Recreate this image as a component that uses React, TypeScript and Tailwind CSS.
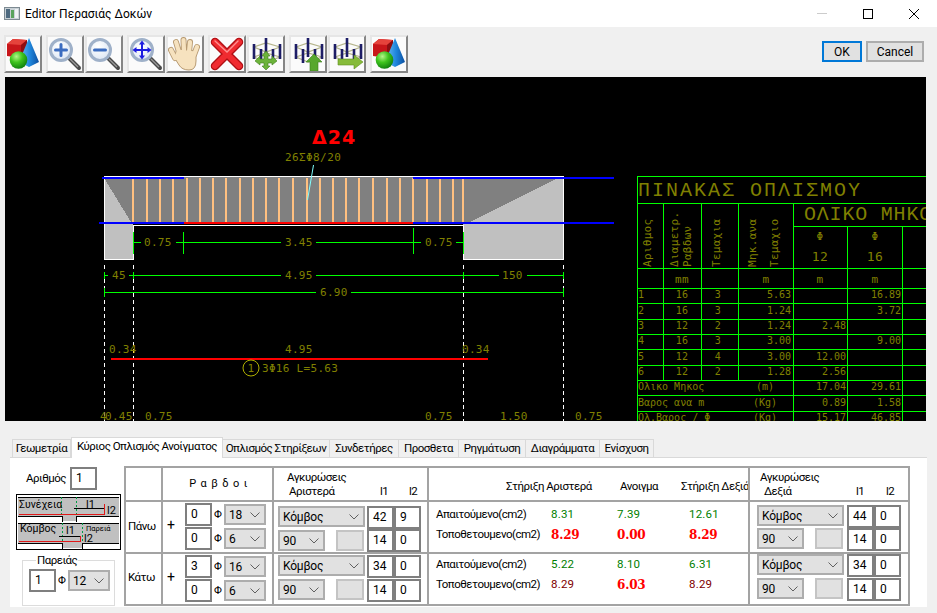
import React from "react";

const body = "text-[11.5px] tracking-[-0.5px] whitespace-nowrap";
const sel = "bg-[#e1e1e1] border-2 border-[#adadad] flex items-center justify-between pl-[3px] pr-[4px] text-[12px] tracking-[-0.2px] leading-none text-black";
const chev = (
  <svg width="10" height="6" viewBox="0 0 10 6" className="shrink-0"><path d="M0.5 0.5 L5 5 L9.5 0.5" fill="none" stroke="#606060" strokeWidth="1" /></svg>
);
function Sel({ v, w }: { v: string; w: string }) {
  return <div className={sel + " h-[21px] " + w}><span>{v}</span>{chev}</div>;
}
function Box({ v }: { v: string }) {
  return <div className="w-[27px] h-[23px] shrink-0 border-2 border-[#7f7f7f] bg-white flex items-center pl-[4px] pb-[2px] text-[12px] leading-none text-black">{v}</div>;
}

function Defs() {
  return (
    <defs>
      <radialGradient id="sph" cx="0.38" cy="0.3" r="0.75"><stop offset="0" stopColor="#b6f58a" /><stop offset="0.45" stopColor="#3fc51e" /><stop offset="1" stopColor="#0c7a0c" /></radialGradient>
      <linearGradient id="con" x1="0" x2="1" y1="0" y2="0"><stop offset="0" stopColor="#6fc3f5" /><stop offset="0.55" stopColor="#1f86dc" /><stop offset="1" stopColor="#0d4fa0" /></linearGradient>
      <radialGradient id="lens" cx="0.4" cy="0.35" r="0.8"><stop offset="0" stopColor="#ffffff" /><stop offset="1" stopColor="#d6e2f2" /></radialGradient>
    </defs>
  );
}
function Shapes() {
  return (
    <svg width="34" height="34" viewBox="0 0 34 34">
      <Defs />
      <path d="M1 7 L7 2 L21 3 L21 16 L15 21 L1 19 Z" fill="#c8161a" />
      <path d="M1 7 L7 2 L21 3 L15 8 Z" fill="#e5433c" />
      <path d="M15 8 L21 3 L21 16 L15 21 Z" fill="#8e0f12" />
      <path d="M23 1 L33 25 L23 30 L13 25 Z" fill="url(#con)" />
      <circle cx="12.5" cy="23" r="8.8" fill="url(#sph)" />
    </svg>
  );
}
function Mag({ kind }: { kind: "plus" | "minus" | "move" }) {
  return (
    <svg width="34" height="34" viewBox="0 0 34 34">
      <Defs />
      <line x1="21" y1="21" x2="31" y2="31" stroke="#4a4a4a" strokeWidth="4" strokeLinecap="round" />
      <line x1="22" y1="22" x2="30" y2="30" stroke="#9a9a9a" strokeWidth="1.2" />
      <circle cx="13" cy="13" r="10.5" fill="url(#lens)" stroke="#9fb1c9" strokeWidth="3" />
      {kind === "plus" && <path d="M13 7.5 V18.5 M7.5 13 H18.5" stroke="#3b6cc0" strokeWidth="3" strokeLinecap="round" />}
      {kind === "minus" && <path d="M7.5 13 H18.5" stroke="#3b6cc0" strokeWidth="3" strokeLinecap="round" />}
      {kind === "move" && (
        <g fill="#1c1ce0">
          <path d="M13 5 V21 M5 13 H21" stroke="#1c1ce0" strokeWidth="2" />
          <path d="M13 3.5 L16 7.5 H10 Z M13 22.5 L16 18.5 H10 Z M3.5 13 L7.5 10 V16 Z M22.5 13 L18.5 10 V16 Z" />
        </g>
      )}
    </svg>
  );
}
function Hand() {
  const d = "M7 21 L3 13 M11 15 L8 5 M16 14 L15.5 3 M21 15 L22 5 M26 18 L29 10";
  return (
    <svg width="34" height="34" viewBox="0 0 34 34">
      <path d={d} stroke="#b79a72" strokeWidth="6" strokeLinecap="round" fill="none" />
      <path d="M6 20 L11 28 Q14 33 21 33 Q28 33 28 24 L28 14 L9 12 Z" fill="#f6e2bf" stroke="#b79a72" strokeWidth="1" />
      <path d={d} stroke="#f6e2bf" strokeWidth="4.2" strokeLinecap="round" fill="none" />
    </svg>
  );
}
function Cross() {
  return (
    <svg width="34" height="34" viewBox="0 0 34 34">
      <path d="M5 5 L29 29 M29 5 L5 29" stroke="#b00f14" strokeWidth="8.5" strokeLinecap="round" />
      <path d="M5 5 L29 29 M29 5 L5 29" stroke="#f02b30" strokeWidth="6" strokeLinecap="round" />
      <path d="M5 4 L17 15 L28 4" stroke="#ff8f8f" strokeWidth="1.4" fill="none" strokeLinecap="round" />
    </svg>
  );
}
function Cage({ arrow }: { arrow: "move" | "up" | "right" }) {
  return (
    <svg width="34" height="34" viewBox="0 0 34 34">
      <path d="M5 10 L17 6 L31 10 L17 15 Z M5 20 L17 16 L31 20 L17 25 Z" fill="none" stroke="#b5b58c" strokeWidth="1.2" />
      <g stroke="#1d1d66" strokeWidth="2.6">
        <line x1="5" y1="7" x2="5" y2="22" />
        <line x1="17" y1="1" x2="17" y2="20" />
        <line x1="31" y1="7" x2="31" y2="22" />
        <line x1="12" y1="12" x2="12" y2="26" />
        <line x1="24" y1="12" x2="24" y2="24" />
      </g>
      {arrow === "move" && (
        <path d="M17 14 L21 19 H19 V22 H23 V19 L28 24 L23 28 V26 H19 V29 H21 L17 33 L13 29 H15 V26 H11 V28 L6 24 L11 19 V22 H15 V19 H13 Z" fill="#6cb33a" stroke="#3e7d1c" strokeWidth="0.6" />
      )}
      {arrow === "up" && <path d="M23 17 L31 25 H27 V34 H19 V25 H15 Z" fill="#58a72e" stroke="#3e7d1c" strokeWidth="0.6" />}
      {arrow === "right" && <path d="M24 18 L33 25 L24 32 V28 H8 V22 H24 Z" fill="#86bb3a" stroke="#5f8f20" strokeWidth="0.6" />}
    </svg>
  );
}
function ToolBtn({ children }: { children: React.ReactNode }) {
  return (
    <div className="w-[38px] h-[38px] bg-[#fbfbfb] border-2 border-t-[#e6e6e6] border-l-[#e6e6e6] border-r-[#858585] border-b-[#858585] flex items-center justify-center">
      {children}
    </div>
  );
}

type TP = { x: number; y: number; c?: string; s?: number; a?: "start" | "middle" | "end"; ls?: number; t: string };
const OL = "#808000";
function T({ x, y, c = OL, s = 11, a = "start", ls = 0.3, t }: TP) {
  return <text x={x} y={y} fill={c} fontSize={s} textAnchor={a} letterSpacing={ls}>{t}</text>;
}
function V({ x, y, t }: { x: number; y: number; t: string }) {
  return <text transform={`translate(${x},${y}) rotate(-90)`} fill={OL} fontSize={11} letterSpacing={0.3}>{t}</text>;
}

const stirrups = [133, 147, 160, 173, 187, 200, 213, 226, 240, 253, 266, 279, 293, 307, 320, 333, 346, 359, 373, 387, 400, 413, 427, 440, 453, 463];
const hLines = [288, 303, 319, 334, 349, 365, 380, 395, 411];
const rows = [
  ["1", "16", "3", "5.63", "", "16.89", 298],
  ["2", "16", "3", "1.24", "", "3.72", 314],
  ["3", "12", "2", "1.24", "2.48", "", 329],
  ["4", "16", "3", "3.00", "", "9.00", 344],
  ["5", "12", "4", "3.00", "12.00", "", 360],
  ["6", "12", "2", "1.28", "2.56", "", 375],
];
const totals = [
  ["Ολικο Μηκος", "(m)", "17.04", "29.61", 390],
  ["Βαρος ανα m", "(Kg)", "0.89", "1.58", 406],
  ["Ολ.Βαρος / Φ", "(Kg)", "15.17", "46.85", 421],
];

function Drawing() {
  const G = "#00ff00";
  return (
    <svg width="921" height="344" viewBox="5 77 921 344" className="block [font-family:'DejaVu_Sans_Mono',monospace]">
      <g shapeRendering="crispEdges">
        <rect x="104" y="177" width="460" height="46" fill="#808080" />
        <polygon points="104,178 131,222 104,222" fill="#c0c0c0" />
        <polygon points="470,222 558,178 564,178 564,222" fill="#c0c0c0" />
        <rect x="104" y="222" width="29" height="37" fill="#c0c0c0" />
        <rect x="463" y="222" width="101" height="37" fill="#c0c0c0" />
        {stirrups.map((x) => <rect key={x} x={x - 1} y="178" width="2" height="44" fill="#ffc080" />)}
        <path d="M104.5 176.5 H563.5 V259.5 H463.5 V225.5 H133.5 V259.5 H104.5 Z" fill="none" stroke="#fff" />
        <rect x="102" y="177" width="82" height="2" fill="#0000ff" />
        <rect x="413" y="177" width="201" height="2" fill="#0000ff" />
        <rect x="99" y="222" width="85" height="2" fill="#0000ff" />
        <rect x="413" y="222" width="201" height="2" fill="#0000ff" />
        <rect x="184" y="222" width="229" height="2" fill="#ff0000" />
        <g stroke="#fff" strokeDasharray="4 3">
          <line x1="104.5" y1="265" x2="104.5" y2="421" />
          <line x1="133.5" y1="265" x2="133.5" y2="421" />
          <line x1="463.5" y1="265" x2="463.5" y2="421" />
          <line x1="563.5" y1="265" x2="563.5" y2="421" />
        </g>
        <g stroke={G}>
          <path d="M133 242.5 H141 M176 242.5 H281 M316 242.5 H421 M456 242.5 H464" />
          <path d="M133.5 232 V254 M183.5 232 V254 M413.5 228 V254 M463.5 232 V254" />
          <path d="M104 275.5 H108 M129 275.5 H281 M316 275.5 H499 M527 275.5 H564" />
          <path d="M104 292.5 H316 M351 292.5 H564" />
          <path d="M104.5 272 V279 M133.5 272 V279 M463.5 272 V279 M563.5 272 V279 M104.5 288 V297 M563.5 288 V297" />
        </g>
        <rect x="111" y="358" width="377" height="2" fill="#ff0000" />
        <g stroke={G}>
          <path d="M637.5 176.5 H926 M637.5 203.5 H926 M793.5 226.5 H926 M637.5 268.5 H926" />
          {hLines.map((y) => <line key={y} x1="637.5" y1={y + 0.5} x2="926" y2={y + 0.5} />)}
          <path d="M637.5 176 V421 M663.5 203 V381 M701.5 203 V381 M738.5 203 V381 M793.5 203 V421 M847.5 226 V421 M902.5 226 V421" />
        </g>
      </g>
      <line x1="313.5" y1="165" x2="307.5" y2="200" stroke="#80ffff" strokeWidth="1" />
      <text x="312" y="144" fill="#ff0000" fontSize="19" fontWeight="700" letterSpacing="1" className="[font-family:'DejaVu_Sans',sans-serif]">Δ24</text>
      <T x={285} y={161} t="26ΣΦ8/20" ls={0.4} />
      <T x={144} y={246} t="0.75" />
      <T x={285} y={246} t="3.45" />
      <T x={425} y={246} t="0.75" />
      <T x={112} y={279} t="45" />
      <T x={285} y={279} t="4.95" />
      <T x={502} y={279} t="150" />
      <T x={320} y={296} t="6.90" />
      <T x={109} y={353} t="0.34" />
      <T x={285} y={353} t="4.95" />
      <T x={462} y={353} t="0.34" />
      <circle cx="251" cy="368" r="8" fill="none" stroke="#b0b000" strokeWidth="1" />
      <T x={251} y={372} a="middle" t="1" />
      <T x={262} y={372} t="3Φ16 L=5.63" />
      <T x={100} y={420} t="4" />
      <T x={105} y={420} t="0.45" />
      <T x={145} y={420} t="0.75" />
      <T x={425} y={420} t="0.75" />
      <T x={500} y={420} t="1.50" />
      <T x={575} y={420} t="0.75" />

      <g className="[font-family:'Liberation_Mono',monospace]">
        <T x={638} y={196} s={20} ls={2} t="ΠΙΝΑΚΑΣ ΟΠΛΙΣΜΟΥ" />
        <T x={804} y={220} s={20} ls={0.8} t="ΟΛΙΚΟ ΜΗΚΟΣ" />
      </g>
      <V x={651} y={267} t="Αριθμος" />
      <V x={678} y={267} t="Διαμετρ." />
      <V x={691} y={267} t="Ραβδων" />
      <V x={720} y={267} t="Τεμαχια" />
      <V x={756} y={267} t="Μηκ.ανα" />
      <V x={778} y={267} t="Τεμαχιο" />
      <T x={682} y={283} a="middle" t="mm" />
      <T x={766} y={283} a="middle" t="m" />
      <T x={820} y={283} a="middle" t="m" />
      <T x={875} y={283} a="middle" t="m" />
      <T x={930} y={283} a="middle" t="m" />
      <T x={820} y={240} a="middle" t="Φ" />
      <T x={875} y={240} a="middle" t="Φ" />
      <T x={930} y={240} a="middle" t="Φ" />
      <T x={820} y={261} a="middle" s={13} t="12" />
      <T x={875} y={261} a="middle" s={13} t="16" />
      {rows.map((r) => (
        <g key={String(r[0])}>
          <T x={638} y={r[6] as number} s={10} ls={0} t={r[0] as string} />
          <T x={682} y={r[6] as number} s={10} a="middle" t={r[1] as string} />
          <T x={718} y={r[6] as number} s={10} a="middle" t={r[2] as string} />
          <T x={791} y={r[6] as number} s={10} a="end" ls={0} t={r[3] as string} />
          <T x={846} y={r[6] as number} s={10} a="end" ls={0} t={r[4] as string} />
          <T x={901} y={r[6] as number} s={10} a="end" ls={0} t={r[5] as string} />
        </g>
      ))}
      {totals.map((r) => (
        <g key={String(r[0])}>
          <T x={638} y={r[4] as number} s={10} ls={0} t={r[0] as string} />
          <T x={765} y={r[4] as number} s={10} a="middle" ls={0} t={r[1] as string} />
          <T x={846} y={r[4] as number} s={10} a="end" ls={0} t={r[2] as string} />
          <T x={901} y={r[4] as number} s={10} a="end" ls={0} t={r[3] as string} />
        </g>
      ))}
    </svg>
  );
}

function Legend() {
  return (
    <svg width="105" height="56" viewBox="16 493 105 56" className="block ml-[6px] mt-[4px] [font-family:Roboto,sans-serif]">
      <rect x="16" y="493" width="105" height="56" fill="#fff" />
      <path d="M18 496 H119 V515 H76 V520 H62 V515 H18 Z" fill="#c0c0c0" />
      <path d="M18 522 H119 V543 H82 V547 H62 V543 H18 Z" fill="#c0c0c0" />
      <g shapeRendering="crispEdges" fill="none">
        <rect x="16.5" y="493.5" width="104" height="55" stroke="#000" strokeWidth="1.6" />
        <path d="M18 496.5 H119 M18 515.5 H62 V521 M76 521 V515.5 H119 M18 522.5 H119 M18 542.5 H62 V548 M82 548 V542.5 H119" stroke="#000" />
        <path d="M61.5 496 V515 M76.5 496 V515 M62.5 522 V542 M82.5 522 V542" stroke="#009a44" strokeDasharray="2 2" />
        <path d="M19 513.5 H104 V503" stroke="#e01818" />
        <path d="M74 507.5 H104" stroke="#000" />
        <path d="M19 540.5 H80 V535" stroke="#e01818" />
        <path d="M59 535.5 H80" stroke="#000" />
      </g>
      <g fill="#000" fontSize="10.5">
        <text x="19" y="507">Συνέχεια</text>
        <text x="86" y="507" fontSize="11">l1</text>
        <text x="107" y="513" fontSize="11">l2</text>
        <text x="20" y="531">Κόμβος</text>
        <text x="66" y="533" fontSize="11">l1</text>
        <text x="84" y="541" fontSize="11">l2</text>
        <text x="86" y="530" fontSize="7.5">Παρειά</text>
      </g>
    </svg>
  );
}

const cell = "border-t-2 border-l-2 border-[#a3a3a3]";

function RebarRow({ a, d }: { a: string; d: string }) {
  return (
    <div className="flex items-center">
      <Box v={a} />
      <span className="w-[12px] text-center text-[11px] leading-none">Φ</span>
      <Sel v={d} w="w-[42px]" />
    </div>
  );
}
function Rebars({ a, border }: { a: [string, string, string, string]; border?: string }) {
  return (
    <div className={cell + " flex pt-[1px] " + (border || "")}>
      <div className="w-[22px] pl-[4px] pt-[12px] text-[14px] leading-[20px]">+</div>
      <div className="flex flex-col gap-[1px]">
        <RebarRow a={a[0]} d={a[1]} />
        <RebarRow a={a[2]} d={a[3]} />
      </div>
    </div>
  );
}
function Anchor({ pad, gapIn, gapSel, v, left, ml, wrap }: { pad: string; gapIn: string; gapSel: string; v: [string, string, string, string]; left: string; ml: string; wrap: string }) {
  return (
    <div className={cell + " flex " + left + " " + pad + " " + wrap}>
      <div className={"flex flex-col w-[87px] " + gapSel}>
        <Sel v="Κόμβος" w="w-[87px]" />
        <div className="flex justify-between pr-[1px]">
          <Sel v="90" w="w-[47px]" />
          <div className="w-[28px] h-[21px] bg-[#e1e1e1] border-2 border-[#c4c4c4]" />
        </div>
      </div>
      <div className={"grid grid-cols-[27px_27px] content-start " + ml + " " + gapIn}>
        {v.map((x, i) => <Box key={i} v={x} />)}
      </div>
    </div>
  );
}

const bold = "font-bold text-[12px] tracking-[-0.2px] text-[#ff0000] [font-family:'DejaVu_Serif',serif]";
const green = "text-[#008000] text-[11.5px] tracking-[0.2px]";
const dark = "text-[#800000] text-[11.5px] tracking-[0.2px]";
function ResultRow({ pad, v, wrap }: { pad: string; v: [string, string, string, string, string, string]; wrap?: string }) {
  const labels = ["Απαιτούμενο(cm2)", "Τοποθετουμενο(cm2)"];
  const st = (x: string, i: number) => (x.startsWith("*") ? bold : i === 0 ? green : dark);
  return (
    <div className={cell + " pl-[7px] flex flex-col " + pad + " " + (wrap || "")}>
      {labels.map((l, i) => (
        <div key={l} className="grid grid-cols-[115px_66px_72px_auto] h-[20px] items-center">
          <span className={body + " leading-none"}>{l}</span>
          {[v[i * 3], v[i * 3 + 1], v[i * 3 + 2]].map((x, k) => (
            <span key={k} className={st(x, i) + " leading-none"}>{x.replace("*", "")}</span>
          ))}
        </div>
      ))}
    </div>
  );
}

const tabs: [string, string][] = [
  ["Γεωμετρία", "w-[59px]"],
  ["Κύριος Οπλισμός Ανοίγματος", "w-[152px]"],
  ["Οπλισμός Στηρίξεων", "w-[107px]"],
  ["Συνδετήρες", "w-[69px]"],
  ["Προσθετα", "w-[60px]"],
  ["Ρηγμάτωση", "w-[67px]"],
  ["Διαγράμματα", "w-[74px]"],
  ["Ενίσχυση", "w-[54px]"],
];

export default function App() {
  return (
    <div className="w-[937px] h-[613px] overflow-hidden bg-[#f0f0f0] flex flex-col text-black [font-family:Roboto,sans-serif]">
      <div className="h-[27px] bg-white flex items-center shrink-0">
        <svg width="16" height="13" viewBox="0 0 16 13" className="ml-[4px]">
          <rect x="0.5" y="0.5" width="15" height="12" fill="#c9d1d6" stroke="#7d8a92" />
          <rect x="2" y="2" width="4" height="9" fill="#4e6a80" />
          <rect x="7" y="3" width="3" height="8" fill="#58a35c" />
          <rect x="11" y="2" width="3" height="9" fill="#eef2f4" />
        </svg>
        <span className="ml-[5px] text-[12px] leading-none">Editor Περασιάς Δοκών</span>
        <div className="ml-auto flex items-center">
          <div className="w-[10px] h-px bg-[#cccccc] mr-[36px]" />
          <div className="w-[10px] h-[10px] border border-black mr-[36px]" />
          <svg width="10" height="10" viewBox="0 0 10 10" className="mr-[18px]"><path d="M0 0 L10 10 M10 0 L0 10" stroke="#000" strokeWidth="1" /></svg>
        </div>
      </div>
      <div className="h-[50px] shrink-0 flex items-start pt-[8px] pl-[4px]">
        <div className="flex gap-[4px]">
          <ToolBtn><Shapes /></ToolBtn>
          <div className="flex gap-[1px]">
            <ToolBtn><Mag kind="plus" /></ToolBtn>
            <ToolBtn><Mag kind="minus" /></ToolBtn>
          </div>
          <div className="flex gap-[1px]">
            <ToolBtn><Mag kind="move" /></ToolBtn>
            <ToolBtn><Hand /></ToolBtn>
          </div>
          <div className="flex gap-[1px]">
            <ToolBtn><Cross /></ToolBtn>
            <ToolBtn><Cage arrow="move" /></ToolBtn>
          </div>
          <div className="flex gap-[1px]">
            <ToolBtn><Cage arrow="up" /></ToolBtn>
            <ToolBtn><Cage arrow="right" /></ToolBtn>
          </div>
          <ToolBtn><Shapes /></ToolBtn>
        </div>
        <div className="ml-auto flex gap-[4px] pr-[13px] pt-[6px]">
          <div className="w-[40px] h-[21px] border-2 border-[#0078d7] bg-[#e1e1e1] flex items-center justify-center text-[12px] leading-none">OK</div>
          <div className="w-[58px] h-[21px] border-2 border-[#adadad] bg-[#e1e1e1] flex items-center justify-center text-[12px] leading-none">Cancel</div>
        </div>
      </div>
      <div className="ml-[5px] w-[921px] h-[344px] shrink-0 bg-black">
        <Drawing />
      </div>
      <div className="mt-[16px] h-[20px] shrink-0 flex items-end pl-[12px] relative z-10">
        {tabs.map(([t, w], i) => (
          <div
            key={t}
            className={
              w + " " + body +
              " leading-none flex items-center justify-center border-t border-r border-[#d9d9d9] " +
              (i === 1 ? "h-[21px] bg-white border-l pb-[3px] -mb-px" : "h-[18px] bg-[#f0f0f0] " + (i === 0 ? "border-l" : ""))
            }
          >
            {t}
          </div>
        ))}
      </div>
      <div className="ml-[10px] w-[917px] h-[150px] shrink-0 bg-white border-t border-[#d9d9d9] flex">
        <div className="w-[114px] shrink-0 pt-[9px] flex flex-col">
          <div className="flex items-center pl-[16px] gap-[6px]">
            <span className={body + " leading-none w-[38px]"}>Αριθμός</span>
            <Box v="1" />
          </div>
          <Legend />
          <fieldset className="ml-[12px] w-[93px] h-[53px] mt-[3px] border border-[#dcdcdc] pl-[6px]">
            <legend className={"ml-[7px] px-[1px] leading-[14px] " + body}>Παρειάς</legend>
            <div className="flex items-center mt-[2px]">
              <Box v="1" />
              <span className="w-[12px] text-center text-[11px] leading-none">Φ</span>
              <Sel v="12" w="w-[42px]" />
            </div>
          </fieldset>
        </div>
        <div className="mt-[8px] w-[786px] h-[140px] grid grid-cols-[37px_111px_155px_321px_162px] grid-rows-[34px_52px_54px]">
          <div className={cell} />
          <div className={cell + " flex items-center justify-center text-[11px] tracking-[4.5px] pl-[6px] whitespace-nowrap"}>Ραβδοι</div>
          <div className={cell + " flex pt-[2px] pl-[13px] leading-[14px] " + body}>
            <div className="w-[93px]">
              <div>Αγκυρώσεις</div>
              <div className="pl-[2px]">Αριστερά</div>
            </div>
            <div className="w-[29px] pt-[14px]">l1</div>
            <div className="pt-[14px]">l2</div>
          </div>
          <div className={cell + " grid grid-cols-[191px_61px_auto] pt-[11px] leading-[14px] " + body}>
            <div className="pl-[77px]">Στήριξη Αριστερά</div>
            <div>Ανοιγμα</div>
            <div>Στήριξη Δεξιά</div>
          </div>
          <div className={cell + " border-r-2 flex pt-[2px] pl-[10px] leading-[14px] " + body}>
            <div className="w-[96px]">
              <div>Αγκυρώσεις</div>
              <div className="pl-[4px]">Δεξιά</div>
            </div>
            <div className="w-[30px] pt-[14px]">l1</div>
            <div className="pt-[14px]">l2</div>
          </div>

          <div className={cell + " leading-none flex items-center pl-[2px] " + body}>Πάνω</div>
          <Rebars a={["0", "18", "0", "6"]} />
          <Anchor pad="pt-[4px]" left="pl-[4px]" ml="ml-[2px]" gapSel="gap-[3px]" gapIn="" wrap="" v={["42", "9", "14", "0"]} />
          <ResultRow pad="pt-[3px]" v={["8.31", "7.39", "12.61", "*8.29", "*0.00", "*8.29"]} />
          <Anchor pad="pt-[3px]" left="pl-[7px]" ml="ml-[3px]" gapSel="gap-[2px]" gapIn="" wrap="border-r-2" v={["44", "0", "14", "0"]} />

          <div className={cell + " border-b-2 leading-none flex items-center pl-[2px] pb-[2px] " + body}>Κάτω</div>
          <Rebars a={["3", "16", "0", "6"]} border="border-b-2" />
          <Anchor pad="pt-[1px]" left="pl-[4px]" ml="ml-[2px]" gapSel="gap-[3px]" gapIn="gap-y-[1px]" wrap="border-b-2" v={["34", "0", "14", "0"]} />
          <ResultRow pad="pt-[1px]" wrap="border-b-2" v={["5.22", "8.10", "6.31", "8.29", "*6.03", "8.29"]} />
          <Anchor pad="pt-0" left="pl-[7px]" ml="ml-[3px]" gapSel="gap-[3px]" gapIn="gap-y-[1px]" wrap="border-r-2 border-b-2" v={["34", "0", "14", "0"]} />
        </div>
      </div>
    </div>
  );
}
